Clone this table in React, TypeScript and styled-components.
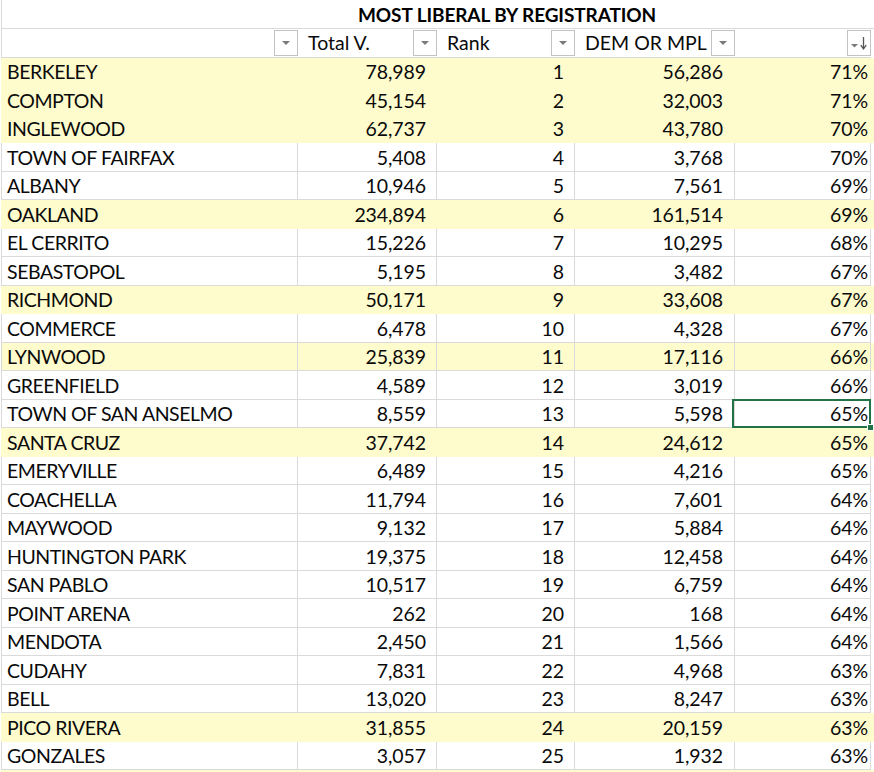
import React from "react";
import styled, { createGlobalStyle, css } from "styled-components";

interface CityRow {
  city: string;
  total: string;
  rank: number;
  dem: string;
  pct: string;
  highlight?: boolean;
  lined?: boolean;
}

const rows: CityRow[] = [
  { city: "BERKELEY", total: "78,989", rank: 1, dem: "56,286", pct: "71%", highlight: true },
  { city: "COMPTON", total: "45,154", rank: 2, dem: "32,003", pct: "71%", highlight: true },
  { city: "INGLEWOOD", total: "62,737", rank: 3, dem: "43,780", pct: "70%", highlight: true },
  { city: "TOWN OF FAIRFAX", total: "5,408", rank: 4, dem: "3,768", pct: "70%" },
  { city: "ALBANY", total: "10,946", rank: 5, dem: "7,561", pct: "69%" },
  { city: "OAKLAND", total: "234,894", rank: 6, dem: "161,514", pct: "69%", highlight: true },
  { city: "EL CERRITO", total: "15,226", rank: 7, dem: "10,295", pct: "68%" },
  { city: "SEBASTOPOL", total: "5,195", rank: 8, dem: "3,482", pct: "67%" },
  { city: "RICHMOND", total: "50,171", rank: 9, dem: "33,608", pct: "67%", highlight: true },
  { city: "COMMERCE", total: "6,478", rank: 10, dem: "4,328", pct: "67%" },
  { city: "LYNWOOD", total: "25,839", rank: 11, dem: "17,116", pct: "66%", highlight: true, lined: true },
  { city: "GREENFIELD", total: "4,589", rank: 12, dem: "3,019", pct: "66%" },
  { city: "TOWN OF SAN ANSELMO", total: "8,559", rank: 13, dem: "5,598", pct: "65%" },
  { city: "SANTA CRUZ", total: "37,742", rank: 14, dem: "24,612", pct: "65%", highlight: true },
  { city: "EMERYVILLE", total: "6,489", rank: 15, dem: "4,216", pct: "65%" },
  { city: "COACHELLA", total: "11,794", rank: 16, dem: "7,601", pct: "64%" },
  { city: "MAYWOOD", total: "9,132", rank: 17, dem: "5,884", pct: "64%" },
  { city: "HUNTINGTON PARK", total: "19,375", rank: 18, dem: "12,458", pct: "64%" },
  { city: "SAN PABLO", total: "10,517", rank: 19, dem: "6,759", pct: "64%" },
  { city: "POINT ARENA", total: "262", rank: 20, dem: "168", pct: "64%" },
  { city: "MENDOTA", total: "2,450", rank: 21, dem: "1,566", pct: "64%" },
  { city: "CUDAHY", total: "7,831", rank: 22, dem: "4,968", pct: "63%" },
  { city: "BELL", total: "13,020", rank: 23, dem: "8,247", pct: "63%" },
  { city: "PICO RIVERA", total: "31,855", rank: 24, dem: "20,159", pct: "63%", highlight: true },
  { city: "GONZALES", total: "3,057", rank: 25, dem: "1,932", pct: "63%" },
];

// the cell that has the green selection box
const SELECTED_RANK = 13;

const GRID = "#dadada";
const YELLOW = "#fefbcd";
const COLUMNS = "297px 139px 138px 160px 136px";

const GlobalStyle = createGlobalStyle`
  html, body {
    margin: 0;
    padding: 0;
    background: #fff;
    overflow: hidden;
  }
  body {
    font-family: Lato, "Open Sans", sans-serif;
    color: #0a0a0a;
  }
`;

const Sheet = styled.div`
  width: 874px;
  padding-left: 1px;
  box-sizing: border-box;
`;

const TitleRow = styled.div`
  height: 29px;
  border-left: 1px solid ${GRID};
  border-bottom: 1px solid ${GRID};
  box-sizing: border-box;
  display: flex;
  align-items: center;
  padding-left: 356px;
`;

const Title = styled.h1`
  margin: 0;
  font-size: 19px;
  font-weight: 700;
  letter-spacing: -0.1px;
  color: #000;
`;

const Row = styled.div<{ $highlight?: boolean; $height: number }>`
  display: grid;
  grid-template-columns: ${COLUMNS};
  height: ${(p) => p.$height}px;
  background: ${(p) => (p.$highlight ? YELLOW : "#fff")};
`;

const Cell = styled.div<{ $right?: boolean; $lined?: boolean; $pad?: number; $selected?: boolean }>`
  position: relative;
  box-sizing: border-box;
  display: flex;
  align-items: center;
  justify-content: ${(p) => (p.$right ? "flex-end" : "flex-start")};
  padding: 0 ${(p) => (p.$right ? p.$pad ?? 10 : 0)}px 0 ${(p) => (p.$right ? 0 : 5)}px;
  font-size: 19.5px;
  letter-spacing: ${(p) => (p.$right ? "-0.1px" : "-0.45px")};
  white-space: nowrap;
  border-right: 1px solid ${(p) => (p.$lined ? GRID : "transparent")};
  border-bottom: 1px solid ${(p) => (p.$lined ? GRID : "transparent")};
  &:first-child {
    border-left: 1px solid ${(p) => (p.$lined ? GRID : "transparent")};
  }
  ${(p) =>
    p.$selected &&
    css`
      &::before {
        content: "";
        position: absolute;
        top: -1px;
        left: -3px;
        right: -1px;
        bottom: -1px;
        border: 2px solid #217346;
        pointer-events: none;
      }
      &::after {
        content: "";
        position: absolute;
        right: -4px;
        bottom: -4px;
        width: 5px;
        height: 5px;
        background: #217346;
        border: 1px solid #fff;
      }
    `}
`;

const HeadCell = styled.div`
  box-sizing: border-box;
  display: flex;
  align-items: center;
  justify-content: space-between;
  padding-left: 10px;
  font-size: 19.5px;
  border-bottom: 1px solid ${GRID};
  &:first-child {
    border-left: 1px solid ${GRID};
  }
`;

const FilterButton = styled.span`
  width: 24px;
  height: 26px;
  box-sizing: border-box;
  border: 1px solid #c3c3c3;
  background: #fff;
  display: flex;
  align-items: center;
  justify-content: center;
  flex-shrink: 0;
`;

const DropArrow = () => (
  <svg width="10" height="6" viewBox="0 0 10 6">
    <path d="M1 1 H9 L5 5 Z" fill="#7b7b7b" />
  </svg>
);

const SortArrow = () => (
  <svg width="22" height="24" viewBox="0 0 22 24">
    <path d="M3 13 H10 L6.5 16.5 Z" fill="#7b7b7b" />
    <path d="M15.5 6 V17" stroke="#555" strokeWidth="1.3" />
    <path d="M12.8 14.2 L15.5 18 L18.2 14.2" stroke="#555" strokeWidth="1.3" fill="none" />
  </svg>
);

const headers = ["", "Total V.", "Rank", "DEM OR MPL", ""];

export default function App() {
  return (
    <>
      <GlobalStyle />
      <Sheet>
        <TitleRow>
          <Title>MOST LIBERAL BY REGISTRATION</Title>
        </TitleRow>

        {/* filter header */}
        <Row $height={28.75}>
          {headers.map((h, i) => (
            <HeadCell key={i}>
              <span>{h}</span>
              <FilterButton>{i === 4 ? <SortArrow /> : <DropArrow />}</FilterButton>
            </HeadCell>
          ))}
        </Row>

        {rows.map((r) => {
          const lined = !r.highlight || r.lined;
          return (
            <Row key={r.rank} $highlight={r.highlight} $height={28.5}>
              <Cell $lined={lined}>{r.city}</Cell>
              <Cell $right $lined={lined}>{r.total}</Cell>
              <Cell $right $lined={lined}>{r.rank}</Cell>
              <Cell $right $lined={lined} $pad={11}>{r.dem}</Cell>
              <Cell $right $lined={lined} $pad={2} $selected={r.rank === SELECTED_RANK}>
                {r.pct}
              </Cell>
            </Row>
          );
        })}

        {/* next row, cut off by the window */}
        <Row $highlight $height={28.5}>
          <Cell />
          <Cell />
          <Cell />
          <Cell />
          <Cell />
        </Row>
      </Sheet>
    </>
  );
}
